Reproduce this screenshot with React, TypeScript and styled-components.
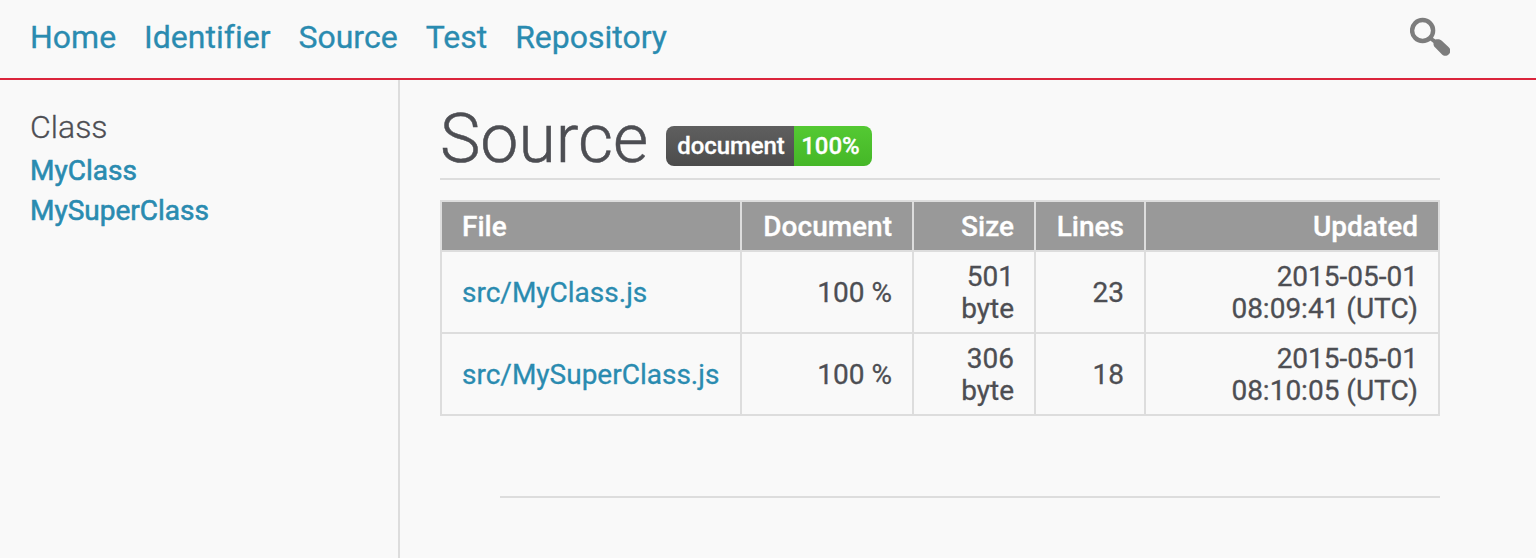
import React from "react";
import styled, { createGlobalStyle } from "styled-components";

const Global = createGlobalStyle`
  *{box-sizing:border-box}
  body{
    margin:0;background:#f9f9f9;color:#4d4e53;font-family:Roboto,sans-serif;font-size:28px;line-height:32px;
    overflow:hidden;font-variant-ligatures:none;-webkit-text-stroke:.3px currentColor;
  }
`;
const Page = styled.div`height:558px;display:flex;flex-direction:column;`;
const Header = styled.header`
  height:80px;flex:none;border-bottom:2px solid #db253c;display:flex;align-items:center;
  justify-content:space-between;padding:0 86px 4px 30px;
`;
const Nav = styled.nav`display:flex;gap:28px;`;
const Link = styled.a`color:#2a8bb0;text-decoration:none;`;
const NavLink = styled(Link)`font-size:32px;line-height:40px;`;
const SearchIcon = styled.svg`width:40px;height:40px;display:block;`;
const Body = styled.div`flex:1;display:flex;`;
const Sidebar = styled.aside`
  width:400px;flex:none;border-right:2px solid #ddd;padding:27px 30px;display:flex;flex-direction:column;
`;
const Kind = styled.div`font-size:32px;font-weight:300;line-height:40px;margin-bottom:4px;`;
const SideLink = styled(Link)`line-height:40px;-webkit-text-stroke-width:.6px;`;
const Main = styled.main`width:1040px;padding:20px 0 0 40px;`;
const Title = styled.div`
  height:80px;border-bottom:2px solid #ddd;display:flex;align-items:flex-start;gap:18px;margin-bottom:20px;
`;
const H1 = styled.h1`margin:0;font-size:68px;line-height:78px;font-weight:300;-webkit-text-stroke-width:.5px;`;
const Badge = styled.div`
  margin-top:26px;height:40px;display:flex;border-radius:8px;overflow:hidden;color:#fff;
  font-size:24px;font-weight:500;line-height:40px;letter-spacing:-.08px;
`;
const BadgeLabel = styled.span`width:128px;padding-left:11px;background:linear-gradient(#5f5f5f,#4c4c4c);`;
const BadgeValue = styled.span`width:78px;padding-left:7px;background:linear-gradient(#54c933,#45b727);`;
const Table = styled.table`border-collapse:collapse;width:1000px;table-layout:fixed;`;
const Th = styled.th<{ $left?: boolean }>`
  height:50px;padding:2px 20px 0;background:#999;color:#fff;font-weight:500;border:2px solid #ddd;
  text-align:${p => (p.$left ? "left" : "right")};
`;
const Td = styled.td<{ $left?: boolean }>`
  height:82px;padding:9px 20px 7px;border:2px solid #ddd;text-align:${p => (p.$left ? "left" : "right")};
`;
const Footer = styled.footer`margin:80px 0 0 60px;border-top:2px solid #ddd;`;

const rows = [
  { file: "src/MyClass.js", size: "501", lines: 23, time: "08:09:41 (UTC)" },
  { file: "src/MySuperClass.js", size: "306", lines: 18, time: "08:10:05 (UTC)" },
];

export default function App() {
  return (
    <Page>
      <Global />
      <Header>
        <Nav>
          {["Home", "Identifier", "Source", "Test", "Repository"].map(t => <NavLink key={t}>{t}</NavLink>)}
        </Nav>
        <SearchIcon viewBox="0 0 40 40">
          <circle cx="12.600" cy="13.500" r="10.500" fill="none" stroke="#7d7d7d" strokeWidth="4.400" />
          <path
            d="M19 22.500L21.500 20L25.500 22.500C27.500 21.800 30 22.200 31.500 23.600L38.500 30C41 32.400 40.800 35.200 38.800 37.200C36.800 39.200 34 39.400 31.800 37.200L25.200 30.600C23.800 29.200 23.300 27.500 23.500 26Z"
            fill="#7d7d7d"
          />
        </SearchIcon>
      </Header>
      <Body>
        <Sidebar>
          <Kind>Class</Kind>
          <SideLink>MyClass</SideLink>
          <SideLink>MySuperClass</SideLink>
        </Sidebar>
        <Main>
          <Title>
            <H1>Source</H1>
            <Badge><BadgeLabel>document</BadgeLabel><BadgeValue>100%</BadgeValue></Badge>
          </Title>
          <Table>
            <colgroup>
              <col style={{ width: 300 }} /><col style={{ width: 172 }} /><col style={{ width: 122 }} />
              <col style={{ width: 110 }} /><col />
            </colgroup>
            <thead><tr><Th $left>File</Th><Th>Document</Th><Th>Size</Th><Th>Lines</Th><Th>Updated</Th></tr></thead>
            <tbody>
              {rows.map(r => (
                <tr key={r.file}>
                  <Td $left><Link>{r.file}</Link></Td>
                  <Td>100 %</Td>
                  <Td>{r.size}<br />byte</Td>
                  <Td>{r.lines}</Td>
                  <Td>2015-05-01<br />{r.time}</Td>
                </tr>
              ))}
            </tbody>
          </Table>
          <Footer />
        </Main>
      </Body>
    </Page>
  );
}
